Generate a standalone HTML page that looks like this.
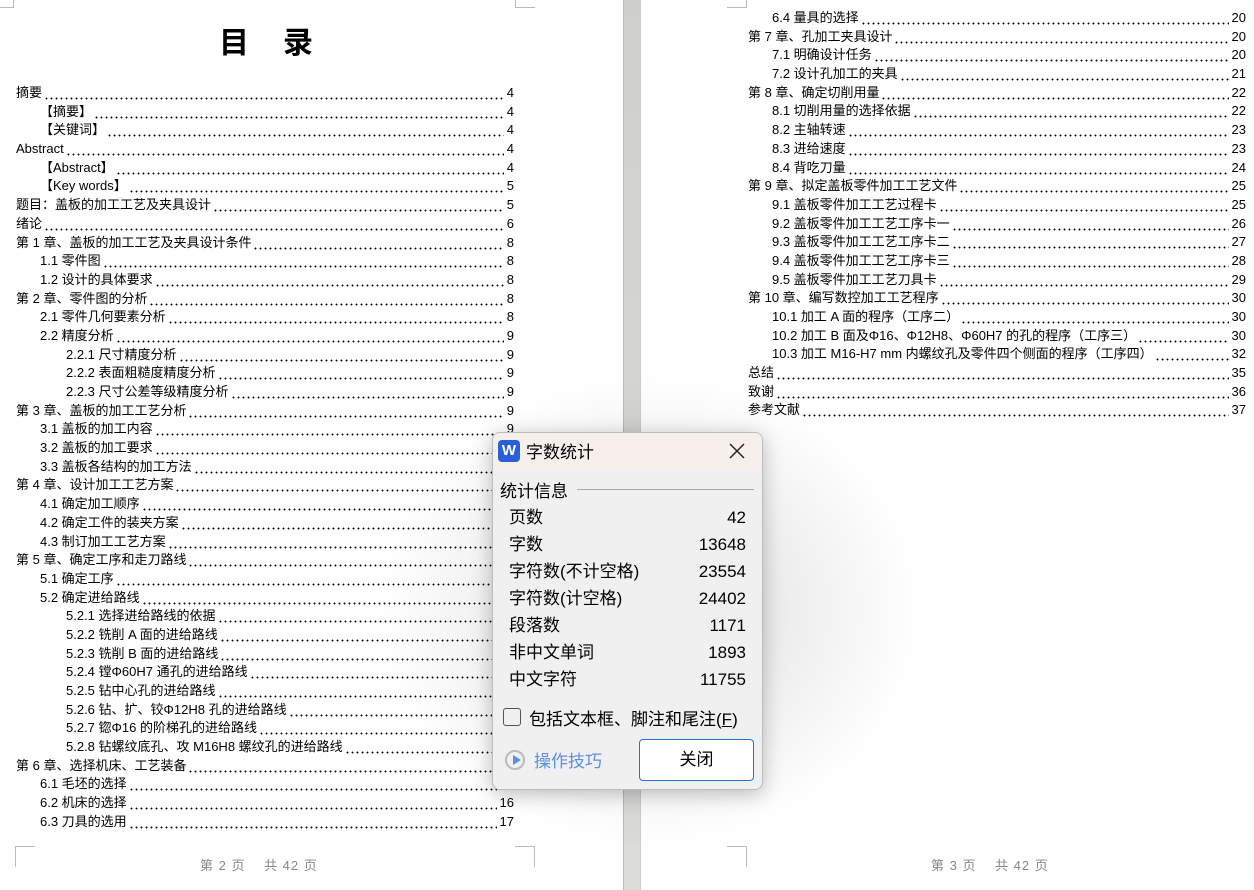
<!DOCTYPE html>
<html><head><meta charset="utf-8">
<style>
*{margin:0;padding:0;box-sizing:border-box}
body{width:1254px;height:890px;overflow:hidden;background:#fff;position:relative;font-family:"Liberation Sans","Noto Sans CJK SC",sans-serif;color:#000}
.page{position:absolute;top:0;height:890px;background:#fff}
#p1{left:0;width:623px}
#p2{left:641px;width:613px}
#gut{position:absolute;left:623px;top:0;width:18px;height:890px;background:linear-gradient(#cfcfcc,#dcdcd8);border-left:1px solid #bbb;border-right:1px solid #ccc}
.title{position:absolute;top:18px;font-size:30px;font-weight:bold;font-family:"Noto Sans CJK SC",sans-serif}
.toc{position:absolute;font-size:13px;line-height:18.7px}
.r{display:flex;height:18.7px;white-space:nowrap}
.r .t{padding-right:2px}
.r .d{flex:1;background-image:radial-gradient(circle,#000 0.75px,transparent 1.1px);background-size:5px 3px;background-repeat:repeat-x;background-position:0 13px}
.r .n{padding-left:3px}
.i1{padding-left:24px}.i2{padding-left:50px}
.mk{position:absolute;border-color:#bbb;border-style:solid;width:20px;height:21px}
.foot{position:absolute;top:855px;font-size:13px;color:#888;letter-spacing:1px}
#shade{position:absolute;left:330px;top:330px;width:640px;height:560px;background:radial-gradient(ellipse at center,rgba(0,0,0,0.14),rgba(0,0,0,0) 60%);pointer-events:none}
#dlg{position:absolute;left:492px;top:432px;width:271px;height:358px;background:#f0f0f0;border:1px solid #bdbdbd;border-radius:8px;overflow:hidden;font-family:"Liberation Sans","Noto Sans CJK SC",sans-serif;font-size:17px;box-shadow:0 4px 20px rgba(0,0,0,.25)}
#dlg .hd{height:36px;background:#f7efec;position:relative}
.wlogo{position:absolute;left:5px;top:7px;width:22px;height:22px;background:#2b5fd9;border-radius:4px;color:#fff;font-weight:bold;font-size:15px;text-align:center;line-height:22px}
.ht{position:absolute;left:33px;top:5px}
.x{position:absolute;right:16px;top:9px;width:18px;height:18px}
.sec{position:absolute;left:7px;top:44px}
.line{position:absolute;left:84px;right:8px;top:56px;border-top:1px solid #a8a8a8}
.st{position:absolute;left:16px;right:16px;display:flex;justify-content:space-between;align-items:baseline;line-height:22px}
.cb{position:absolute;left:10px;top:275px;width:18px;height:18px;border:1.5px solid #555;border-radius:3px}
.cbl{position:absolute;left:36px;top:272px}
.tip{position:absolute;left:41px;top:314px;color:#5b8ee8}
.tipi{position:absolute;left:12px;top:317px;width:20px;height:20px;border:2px solid #bbb;border-radius:50%}
.tipi:after{content:"";position:absolute;left:6px;top:3px;border-left:8px solid #5b8ee8;border-top:5px solid transparent;border-bottom:5px solid transparent}
.btn{position:absolute;left:146px;top:306px;width:115px;height:42px;background:#fff;border:1px solid #2a6fd6;border-radius:4px;text-align:center;line-height:40px}
</style></head><body>
<div class="page" id="p1">
<div class="mk" style="left:-6px;top:-13px;border-width:0 1px 1px 0"></div>
<div class="mk" style="left:515px;top:-13px;border-width:0 0 1px 1px"></div>
<div class="mk" style="left:15px;top:846px;border-width:1px 0 0 1px"></div>
<div class="mk" style="left:515px;top:846px;border-width:1px 1px 0 0"></div>
<div class="title" style="left:219px">目</div><div class="title" style="left:283px">录</div>
<div class="toc" style="left:16px;top:84px;width:498px">
<div class="r"><span class="t">摘要</span><span class="d"></span><span class="n">4</span></div>
<div class="r i1"><span class="t">【摘要】</span><span class="d"></span><span class="n">4</span></div>
<div class="r i1"><span class="t">【关键词】</span><span class="d"></span><span class="n">4</span></div>
<div class="r"><span class="t">Abstract</span><span class="d"></span><span class="n">4</span></div>
<div class="r i1"><span class="t">【Abstract】</span><span class="d"></span><span class="n">4</span></div>
<div class="r i1"><span class="t">【Key words】</span><span class="d"></span><span class="n">5</span></div>
<div class="r"><span class="t">题目：盖板的加工工艺及夹具设计</span><span class="d"></span><span class="n">5</span></div>
<div class="r"><span class="t">绪论</span><span class="d"></span><span class="n">6</span></div>
<div class="r"><span class="t">第 1 章、盖板的加工工艺及夹具设计条件</span><span class="d"></span><span class="n">8</span></div>
<div class="r i1"><span class="t">1.1 零件图</span><span class="d"></span><span class="n">8</span></div>
<div class="r i1"><span class="t">1.2 设计的具体要求</span><span class="d"></span><span class="n">8</span></div>
<div class="r"><span class="t">第 2 章、零件图的分析</span><span class="d"></span><span class="n">8</span></div>
<div class="r i1"><span class="t">2.1 零件几何要素分析</span><span class="d"></span><span class="n">8</span></div>
<div class="r i1"><span class="t">2.2 精度分析</span><span class="d"></span><span class="n">9</span></div>
<div class="r i2"><span class="t">2.2.1 尺寸精度分析</span><span class="d"></span><span class="n">9</span></div>
<div class="r i2"><span class="t">2.2.2 表面粗糙度精度分析</span><span class="d"></span><span class="n">9</span></div>
<div class="r i2"><span class="t">2.2.3 尺寸公差等级精度分析</span><span class="d"></span><span class="n">9</span></div>
<div class="r"><span class="t">第 3 章、盖板的加工工艺分析</span><span class="d"></span><span class="n">9</span></div>
<div class="r i1"><span class="t">3.1 盖板的加工内容</span><span class="d"></span><span class="n">9</span></div>
<div class="r i1"><span class="t">3.2 盖板的加工要求</span><span class="d"></span><span class="n">9</span></div>
<div class="r i1"><span class="t">3.3 盖板各结构的加工方法</span><span class="d"></span><span class="n">9</span></div>
<div class="r"><span class="t">第 4 章、设计加工工艺方案</span><span class="d"></span><span class="n">10</span></div>
<div class="r i1"><span class="t">4.1 确定加工顺序</span><span class="d"></span><span class="n">10</span></div>
<div class="r i1"><span class="t">4.2 确定工件的装夹方案</span><span class="d"></span><span class="n">10</span></div>
<div class="r i1"><span class="t">4.3 制订加工工艺方案</span><span class="d"></span><span class="n">11</span></div>
<div class="r"><span class="t">第 5 章、确定工序和走刀路线</span><span class="d"></span><span class="n">11</span></div>
<div class="r i1"><span class="t">5.1 确定工序</span><span class="d"></span><span class="n">11</span></div>
<div class="r i1"><span class="t">5.2 确定进给路线</span><span class="d"></span><span class="n">12</span></div>
<div class="r i2"><span class="t">5.2.1 选择进给路线的依据</span><span class="d"></span><span class="n">12</span></div>
<div class="r i2"><span class="t">5.2.2 铣削 A 面的进给路线</span><span class="d"></span><span class="n">13</span></div>
<div class="r i2"><span class="t">5.2.3 铣削 B 面的进给路线</span><span class="d"></span><span class="n">13</span></div>
<div class="r i2"><span class="t">5.2.4 镗Φ60H7 通孔的进给路线</span><span class="d"></span><span class="n">14</span></div>
<div class="r i2"><span class="t">5.2.5 钻中心孔的进给路线</span><span class="d"></span><span class="n">14</span></div>
<div class="r i2"><span class="t">5.2.6 钻、扩、铰Φ12H8 孔的进给路线</span><span class="d"></span><span class="n">14</span></div>
<div class="r i2"><span class="t">5.2.7 锪Φ16 的阶梯孔的进给路线</span><span class="d"></span><span class="n">15</span></div>
<div class="r i2"><span class="t">5.2.8 钻螺纹底孔、攻 M16H8 螺纹孔的进给路线</span><span class="d"></span><span class="n">15</span></div>
<div class="r"><span class="t">第 6 章、选择机床、工艺装备</span><span class="d"></span><span class="n">16</span></div>
<div class="r i1"><span class="t">6.1 毛坯的选择</span><span class="d"></span><span class="n">16</span></div>
<div class="r i1"><span class="t">6.2 机床的选择</span><span class="d"></span><span class="n">16</span></div>
<div class="r i1"><span class="t">6.3 刀具的选用</span><span class="d"></span><span class="n">17</span></div>
</div>
<div class="foot" style="left:200px">第 2 页　 共 42 页</div>
</div>
<div id="gut"></div>
<div class="page" id="p2">
<div class="mk" style="left:86px;top:-13px;border-width:0 1px 1px 0"></div>
<div class="mk" style="left:86px;top:846px;border-width:1px 1px 0 0"></div>
<div class="toc" style="left:107px;top:9px;width:498px">
<div class="r i1"><span class="t">6.4 量具的选择</span><span class="d"></span><span class="n">20</span></div>
<div class="r"><span class="t">第 7 章、孔加工夹具设计</span><span class="d"></span><span class="n">20</span></div>
<div class="r i1"><span class="t">7.1 明确设计任务</span><span class="d"></span><span class="n">20</span></div>
<div class="r i1"><span class="t">7.2 设计孔加工的夹具</span><span class="d"></span><span class="n">21</span></div>
<div class="r"><span class="t">第 8 章、确定切削用量</span><span class="d"></span><span class="n">22</span></div>
<div class="r i1"><span class="t">8.1 切削用量的选择依据</span><span class="d"></span><span class="n">22</span></div>
<div class="r i1"><span class="t">8.2 主轴转速</span><span class="d"></span><span class="n">23</span></div>
<div class="r i1"><span class="t">8.3 进给速度</span><span class="d"></span><span class="n">23</span></div>
<div class="r i1"><span class="t">8.4 背吃刀量</span><span class="d"></span><span class="n">24</span></div>
<div class="r"><span class="t">第 9 章、拟定盖板零件加工工艺文件</span><span class="d"></span><span class="n">25</span></div>
<div class="r i1"><span class="t">9.1 盖板零件加工工艺过程卡</span><span class="d"></span><span class="n">25</span></div>
<div class="r i1"><span class="t">9.2 盖板零件加工工艺工序卡一</span><span class="d"></span><span class="n">26</span></div>
<div class="r i1"><span class="t">9.3 盖板零件加工工艺工序卡二</span><span class="d"></span><span class="n">27</span></div>
<div class="r i1"><span class="t">9.4 盖板零件加工工艺工序卡三</span><span class="d"></span><span class="n">28</span></div>
<div class="r i1"><span class="t">9.5 盖板零件加工工艺刀具卡</span><span class="d"></span><span class="n">29</span></div>
<div class="r"><span class="t">第 10 章、编写数控加工工艺程序</span><span class="d"></span><span class="n">30</span></div>
<div class="r i1"><span class="t">10.1 加工 A 面的程序（工序二）</span><span class="d"></span><span class="n">30</span></div>
<div class="r i1"><span class="t">10.2 加工 B 面及Φ16、Φ12H8、Φ60H7 的孔的程序（工序三）</span><span class="d"></span><span class="n">30</span></div>
<div class="r i1"><span class="t">10.3 加工 M16-H7 mm 内螺纹孔及零件四个侧面的程序（工序四）</span><span class="d"></span><span class="n">32</span></div>
<div class="r"><span class="t">总结</span><span class="d"></span><span class="n">35</span></div>
<div class="r"><span class="t">致谢</span><span class="d"></span><span class="n">36</span></div>
<div class="r"><span class="t">参考文献</span><span class="d"></span><span class="n">37</span></div>
</div>
<div class="foot" style="left:290px">第 3 页　 共 42 页</div>
</div>
<div id="shade"></div>
<div id="dlg">
<div class="hd"><div class="wlogo">W</div><div class="ht">字数统计</div>
<svg class="x" viewBox="0 0 18 18"><path d="M2 2L16 16M16 2L2 16" stroke="#222" stroke-width="1.5"/></svg></div>
<div class="sec">统计信息</div><div class="line"></div>
<div class="st" style="top:74px"><span>页数</span><span>42</span></div>
<div class="st" style="top:101px"><span>字数</span><span>13648</span></div>
<div class="st" style="top:128px"><span>字符数(不计空格)</span><span>23554</span></div>
<div class="st" style="top:155px"><span>字符数(计空格)</span><span>24402</span></div>
<div class="st" style="top:182px"><span>段落数</span><span>1171</span></div>
<div class="st" style="top:209px"><span>非中文单词</span><span>1893</span></div>
<div class="st" style="top:236px"><span>中文字符</span><span>11755</span></div>
<div class="cb"></div><div class="cbl">包括文本框、脚注和尾注(<u>F</u>)</div>
<div class="tipi"></div><div class="tip">操作技巧</div>
<div class="btn">关闭</div>
</div>
</body></html>
